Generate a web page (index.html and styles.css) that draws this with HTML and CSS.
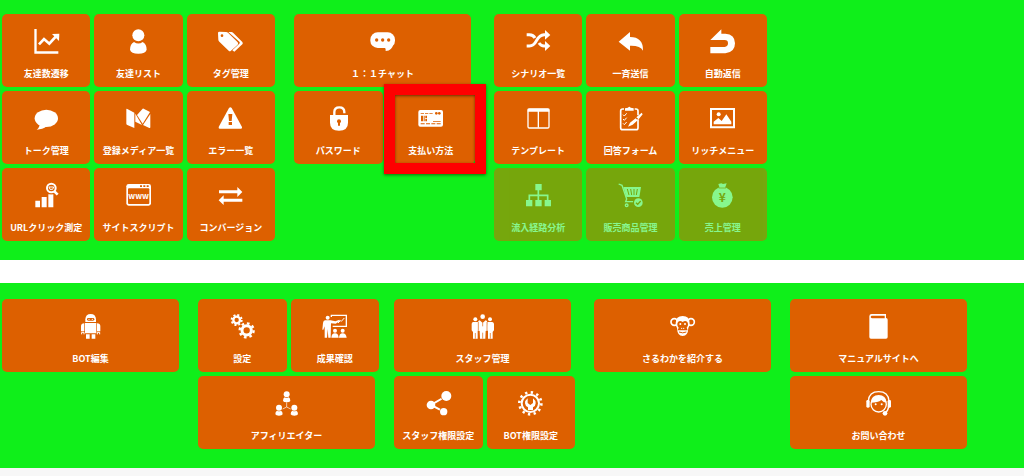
FILE: index.html
```
<!DOCTYPE html>
<html lang="ja">
<head>
  <meta charset="UTF-8">
  <meta name="viewport" content="width=device-width, initial-scale=1.0">
  <title>管理メニュー</title>
  <link rel="stylesheet" href="styles.css">
</head>
<body>
  <main>
    <nav class="menu menu-top" aria-label="メインメニュー">
      <div class="group three">
        <a class="tile" href="#">
          <svg viewBox="0 0 75 75"><path d="M1 0h7v67h65v7H1z"/><path class="line" stroke-width="8" d="M15 46 30 30l16 14 20-22"/><path d="M54 15l22-1-1 22z"/></svg>
          <span>友達数遷移</span>
        </a>
        <a class="tile" href="#">
          <svg viewBox="0 0 75 75"><circle cx="37" cy="19" r="18"/><path d="M12 62Q12 46 24 39q13 9 26 0 12 7 12 23-3 12-25 12T12 62z"/></svg>
          <span>友達リスト</span>
        </a>
        <a class="tile" href="#">
          <svg viewBox="0 0 75 75"><path d="M0 12q0-4 4-4l20 1q4 0 6 2l29 29q3 4 0 7L39 65q-4 4-7 0L4 38q-3-3-3-6z"/><circle class="cut" cx="12" cy="20" r="4"/><path d="M31 9h9q3 0 6 3l27 27q3 4 0 7L49 68l-6-4 21-20q3-3 0-6z"/></svg>
          <span>タグ管理</span>
        </a>
        <a class="tile" href="#">
          <svg viewBox="0 0 75 75"><ellipse cx="37" cy="37" rx="35" ry="26"/><path d="M17 50q1 14-9 21 18 0 30-10z"/></svg>
          <span>トーク管理</span>
        </a>
        <a class="tile" href="#">
          <svg viewBox="0 0 75 75"><path d="M1 10q0-3 3-1l21 11v46L4 57q-3-1-3-4z"/><path d="M28 23l20 34-20-10z"/><path d="M50 8q1-1 3 0l19 10-22 35-17-26z"/><path d="M73 24v40q0 3-3 2L51 57z"/></svg>
          <span>登録メディア一覧</span>
        </a>
        <a class="tile" href="#">
          <svg viewBox="0 0 75 75"><path d="M33 6q4-5 8 0l31 57q1 5-3 5H5q-4 0-3-5z"/><path class="cut" d="M31 24h12l-2 21h-8zM32 48h10v9H32z"/></svg>
          <span>エラー一覧</span>
        </a>
        <a class="tile" href="#">
          <svg viewBox="0 0 75 75"><path d="M4 53h14v20H4zM23 42h15v31H23zM43 34h15v39H43z"/><circle class="cut" cx="52" cy="15" r="19"/><circle class="line" stroke-width="6" cx="52" cy="15" r="13"/><path class="line" stroke-width="8" d="M61 25l10 10"/><path class="line" stroke-width="3" d="M45 12h14l-3 7h-8z"/></svg>
          <span>URLクリック測定</span>
        </a>
        <a class="tile" href="#">
          <svg viewBox="0 0 75 75"><rect x="1" y="3" width="74" height="65" rx="7"/><rect class="cut" x="6" y="16" width="64" height="47" rx="3"/><path class="cut" d="M42 7h6v5h-6zM52 7h6v5h-6zM62 7h6v5h-6z"/><text class="www" x="38" y="47">www</text></svg>
          <span>サイトスクリプト</span>
        </a>
        <a class="tile" href="#">
          <svg viewBox="0 0 75 75"><path d="M3 22h55V12l15 15-15 15V31H3zM73 47H17V37L2 52l15 14V56h56z"/></svg>
          <span>コンバージョン</span>
        </a>
      </div>

      <div class="group two">
        <a class="tile wide" href="#">
          <svg viewBox="0 0 75 75"><rect x="1" y="10" width="74" height="47" rx="22"/><path d="M42 54q7 4 5 12 20-2 23-22z"/><g class="cut"><circle cx="20" cy="33" r="5"/><circle cx="38" cy="33" r="5"/><circle cx="56" cy="33" r="5"/></g></svg>
          <span>１：１チャット</span>
        </a>
        <a class="tile" href="#">
          <svg viewBox="0 0 75 75"><path d="M12 27h54v23q0 24-27 24T12 50z"/><path class="line" stroke-width="7" d="M25 29V18q0-14 15-14t15 14v4"/><circle class="cut" cx="39" cy="46" r="6"/><path class="cut" d="M36 48h6v11h-6z"/></svg>
          <span>パスワード</span>
        </a>
        <a class="tile marked" href="#">
          <svg viewBox="0 0 75 75"><rect x="1" y="12" width="74" height="50" rx="6"/><g class="cut"><circle cx="55" cy="22" r="4"/><circle cx="64" cy="22" r="4"/><path d="M9 29h6v17H9zM17 29h3v17h-3zM22 29h5v7h-5zM22 38h5v8h-5z"/><path d="M8 21h10v2H8zM21 21h10v2H21zM34 21h10v2H34zM45 45h23v2H45zM8 52h12v3H8zM24 52h12v3H24zM40 52h12v3H40zM56 52h12v3H56z"/></g></svg>
          <span>支払い方法</span>
        </a>
      </div>

      <div class="group three">
        <a class="tile" href="#">
          <svg viewBox="0 0 75 75"><path class="line" stroke-width="9" d="M2 17h8q12 0 17 10M2 51h8q13 0 22-17 9-16 22-17h5M39 42q6 9 15 9h5"/><path d="M57 3l16 15-16 14zM57 36l16 15-16 15z"/></svg>
          <span>シナリオ一覧</span>
        </a>
        <a class="tile" href="#">
          <svg viewBox="0 0 75 75"><path d="M2 38L36 9v15q40 0 39 41-8-16-39-15v15z"/></svg>
          <span>一斉送信</span>
        </a>
        <a class="tile" href="#">
          <svg viewBox="0 0 75 75"><path d="M1 33L34 1v13h12q29 2 29 29T46 73H1V54h43q10-1 10-11T44 33z"/></svg>
          <span>自動返信</span>
        </a>
        <a class="tile" href="#">
          <svg viewBox="0 0 75 75"><rect class="line" stroke-width="4" x="6" y="9" width="63" height="57" rx="4"/><path d="M5 8h65v9H5zM35 15h4v50h-4z"/></svg>
          <span>テンプレート</span>
        </a>
        <a class="tile" href="#">
          <svg viewBox="0 0 75 75"><rect class="line" stroke-width="5" x="8" y="9" width="52" height="62" rx="6"/><path class="cut" d="M18 3h32v14H18zM52 28h12v12H52z"/><path d="M21 14V7l9-2q4-6 8 0l9 2v7z"/><path class="line" stroke-width="3" d="M15 26l4 4 7-8M15 39l4 4 7-8M15 52l4 4 7-8"/><path d="M71 20l3 5-12 15-7-6zM53 37l6 6-15 13-14 6 6-12z"/></svg>
          <span>回答フォーム</span>
        </a>
        <a class="tile" href="#">
          <svg viewBox="0 0 75 75"><path fill-rule="evenodd" d="M0 6h75v61H0zM6 12v49h63V12z"/><circle cx="26" cy="25" r="6"/><path d="M11 55V47l14-11 10 9 14-20 15 22v8z"/></svg>
          <span>リッチメニュー</span>
        </a>
        <a class="tile disabled" href="#" aria-disabled="true">
          <svg viewBox="0 0 75 75"><path d="M28 3h19v19H28zM0 51h19v19H0zM28 51h19v19H28zM56 51h19v19H56z"/><path class="line" stroke-width="5" d="M37 20v33M10 53V37h55v16"/></svg>
          <span>流入経路分析</span>
        </a>
        <a class="tile disabled" href="#" aria-disabled="true">
          <svg viewBox="0 0 75 75"><path class="line" stroke-width="4" d="M2 3l10 4 14 41-3 8h23"/><path d="M16 12h53l-5 30H25z"/><path class="line line-cut" stroke-width="3" d="M28 18l5 18M38 18l3 18M48 18v18M58 18l-3 18"/><circle class="line" stroke-width="4" cx="26" cy="67" r="4"/><circle class="cut" cx="61" cy="59" r="16"/><circle cx="61" cy="59" r="13"/><path class="line line-cut" stroke-width="4" d="M54 59l5 5 9-10"/></svg>
          <span>販売商品管理</span>
        </a>
        <a class="tile disabled" href="#" aria-disabled="true">
          <svg viewBox="0 0 75 75"><path d="M25 3l9-2 5 2 11-2-5 14H29z"/><circle cx="37" cy="43" r="31"/><path class="line line-cut" stroke-width="2" d="M26 15h22"/><text class="yen" x="37" y="56">¥</text></svg>
          <span>売上管理</span>
        </a>
      </div>
    </nav>

    <nav class="menu menu-bottom" aria-label="設定メニュー">
      <div class="group">
        <a class="tile wide" href="#">
          <svg viewBox="0 0 75 75"><path d="M22 24V16Q23 0 38 0t16 16v8z"/><rect class="cut" x="27" y="12" width="22" height="8" rx="4"/><circle cx="33" cy="16" r="2"/><circle cx="43" cy="16" r="2"/><path d="M21 27h34v31H21zM19 28v24H9V36q0-7 10-8zM57 28v24h10V36q0-7-10-8zM24 61h11v13H24zM41 61h11v13H41z"/><path class="line" stroke-width="3" d="M11 61v-6h7v6M58 61v-6h7v6"/></svg>
          <span>BOT編集</span>
        </a>
      </div>

      <div class="group two">
        <a class="tile" href="#">
          <svg viewBox="0 0 75 75"><circle class="line" stroke-width="7" cx="20" cy="18" r="10"/><circle class="line" stroke-width="6" stroke-dasharray="6 5.8" cx="20" cy="18" r="15"/><circle class="line" stroke-width="9" cx="50" cy="49" r="14"/><circle class="line" stroke-width="7" stroke-dasharray="8 8.5" cx="50" cy="49" r="21"/></svg>
          <span>設定</span>
        </a>
        <a class="tile" href="#">
          <svg viewBox="0 0 75 75"><path class="line" stroke-width="4" d="M28 9V4h45v33H32"/><circle cx="17" cy="11" r="6"/><path d="M9 19h17l14 3 12-5 2 4-13 8-14-1-1 43h-7l-2-26-2 26H8L8 37 4 47H1L3 27q1-7 6-8z"/><path class="line" stroke-width="3" d="M48 27l7-7 3 2 9-10"/><circle cx="39" cy="50" r="6"/><circle cx="62" cy="50" r="6"/><path d="M28 71q1-13 11-13t11 13zM51 71q1-13 11-13t12 13z"/></svg>
          <span>成果確認</span>
        </a>
        <a class="tile wide" href="#">
          <svg viewBox="0 0 75 75"><circle cx="38" cy="10" r="9"/><path d="M27 30q0-9 5-11 6 4 12 0 5 2 5 11-2 4-11 4t-11-4z"/><circle cx="15" cy="50" r="9"/><path d="M4 70q0-9 5-11 6 4 12 0 5 2 5 11-2 4-11 4T4 70z"/><circle cx="61" cy="50" r="9"/><path d="M50 70q0-9 5-11 6 4 12 0 5 2 5 11-2 4-11 4t-11-4z"/><path class="line" stroke-width="2" d="M38 34v14M26 54l12-6 12 6"/></svg>
          <span>アフィリエイター</span>
        </a>
      </div>

      <div class="group two">
        <a class="tile wide" href="#">
          <svg viewBox="0 0 75 75"><circle cx="16" cy="16" r="6"/><circle cx="60" cy="16" r="6"/><path d="M9 24h15l2 25-3 1v24H9V54l-4-5V30q0-5 4-6zM52 24h15q5 1 5 6v19l-4 5v20H54V50l-4-1z"/><circle cx="38" cy="8" r="7"/><path d="M29 19l9 8 9-8q5 1 5 6v24l-5 2-1 23H30l-1-23-5-2V25q0-5 5-6z"/><path class="line line-cut" stroke-width="2" d="M38 27v10M25 24v25M51 24v25M38 56v18M16 57v17M61 57v17"/></svg>
          <span>スタッフ管理</span>
        </a>
        <a class="tile" href="#">
          <svg viewBox="0 0 75 75"><path class="line" stroke-width="6" d="M61 15L15 42l38 20"/><circle class="cut" cx="61" cy="15" r="17"/><circle class="cut" cx="53" cy="62" r="13"/><circle cx="15" cy="42" r="13"/><circle cx="61" cy="15" r="15"/><circle cx="53" cy="62" r="11"/></svg>
          <span>スタッフ権限設定</span>
        </a>
        <a class="tile" href="#">
          <svg viewBox="0 0 75 75"><circle class="line" stroke-width="6" cx="37" cy="37" r="26"/><circle class="line" stroke-width="8" stroke-dasharray="7 10.3" cx="37" cy="37" r="33"/><path d="M29 22q-8 6-8 15 1 9 9 12v8h15v-8q8-4 8-12 0-9-8-15v14l-8 6-8-6z"/></svg>
          <span>BOT権限設定</span>
        </a>
      </div>

      <div class="group">
        <a class="tile wide" href="#">
          <svg viewBox="0 0 75 75"><circle class="line" stroke-width="5" cx="13" cy="24" r="10"/><circle class="line" stroke-width="5" cx="63" cy="24" r="10"/><path d="M17 28Q17 6 38 6t21 22q0 8-4 14-1 24-17 24T21 42q-4-6-4-14z"/><path class="cut" d="M24 24q6-6 14 0 8-6 14 0 5 9-2 17l3 8H23l3-8q-7-8-2-17z"/><circle cx="31" cy="30" r="3"/><circle cx="45" cy="30" r="3"/><circle cx="35" cy="43" r="2"/><circle cx="41" cy="43" r="2"/><path class="line line-cut" stroke-width="3" d="M27 54q11 5 22 0"/></svg>
          <span>さるわかを紹介する</span>
        </a>
      </div>

      <div class="group">
        <a class="tile wide" href="#">
          <svg viewBox="0 0 75 75"><path d="M10 7q0-7 7-7h43v12q5 0 5 5v52q0 5-5 5H15q-5 0-5-5z"/><path class="cut" d="M17 5h39v8H18q-4-1-4-4t3-4z"/></svg>
          <span>マニュアルサイトへ</span>
        </a>
        <a class="tile wide" href="#">
          <svg viewBox="0 0 75 75"><path class="line" stroke-width="4" d="M7 30Q9 2 38 2t31 28M68 47q-2 13-10 18"/><rect x="1" y="27" width="10" height="23" rx="4"/><rect x="65" y="27" width="10" height="23" rx="4"/><circle class="line" stroke-width="4" cx="38" cy="40" r="23"/><path d="M14 35Q16 12 38 12t24 23q-10 0-16-8-10 8-32 8z"/><circle cx="29" cy="40" r="3"/><circle cx="47" cy="40" r="3"/><circle cx="57" cy="67" r="7"/></svg>
          <span>お問い合わせ</span>
        </a>
      </div>
    </nav>
  </main>
</body>
</html>
```
FILE: styles.css
```
body {
  margin: 0;
  background-color: #f7f7f7;
  font-family: "Noto Sans CJK JP", sans-serif;
}

main {
  background: white;
}

.menu {
  background: #0fef1a;
}

.menu-top {
  display: flex;
  gap: 19px;
  padding: 14px 2px 19px;
  margin-bottom: 23px;
}

.menu-bottom {
  display: grid;
  grid-template-columns: 177px 177px 181px 177px 177px;
  gap: 19px;
  padding: 16px 2px 19px;
}

.group {
  display: grid;
  gap: 4px;
  align-content: start;
}

.group.two {
  width: 181px;
  grid-template-columns: repeat(2, 1fr);
}

.group.three {
  width: 273px;
  grid-template-columns: repeat(3, 1fr);
}

.tile {
  position: relative;
  display: flex;
  flex-direction: column;
  align-items: center;
  gap: 13px;
  box-sizing: border-box;
  height: 73px;
  padding-top: 15px;
  border-radius: 5px;
  background: #dd6000;
  color: white;
  font-size: 9px;
  font-weight: bold;
  line-height: 14px;
  text-decoration: none;
  white-space: nowrap;
}

.tile:hover {
  background: #c65600;
}

.wide {
  width: 177px;
}

.two .wide {
  grid-column: 1 / -1;
}

.disabled {
  opacity: 0.5;
}

/* red frame around the highlighted tile */
.marked::after {
  content: "";
  position: absolute;
  inset: -7px -11px -10px -3px;
  border: 11px solid red;
  box-shadow: 0 1px 3px rgba(0, 0, 0, 0.5), inset 0 1px 3px rgba(0, 0, 0, 0.5);
  pointer-events: none;
}

.marked {
  z-index: 1;
}

svg {
  width: 25px;
  height: 25px;
  fill: currentColor;
  overflow: visible;
}

.cut {
  fill: #dd6000;
}

.line {
  fill: none;
  stroke: currentColor;
}

.line-cut {
  stroke: #dd6000;
}

.www {
  font-size: 24px;
  text-anchor: middle;
}

.yen {
  fill: #dd6000;
  font-size: 36px;
  text-anchor: middle;
}
```
